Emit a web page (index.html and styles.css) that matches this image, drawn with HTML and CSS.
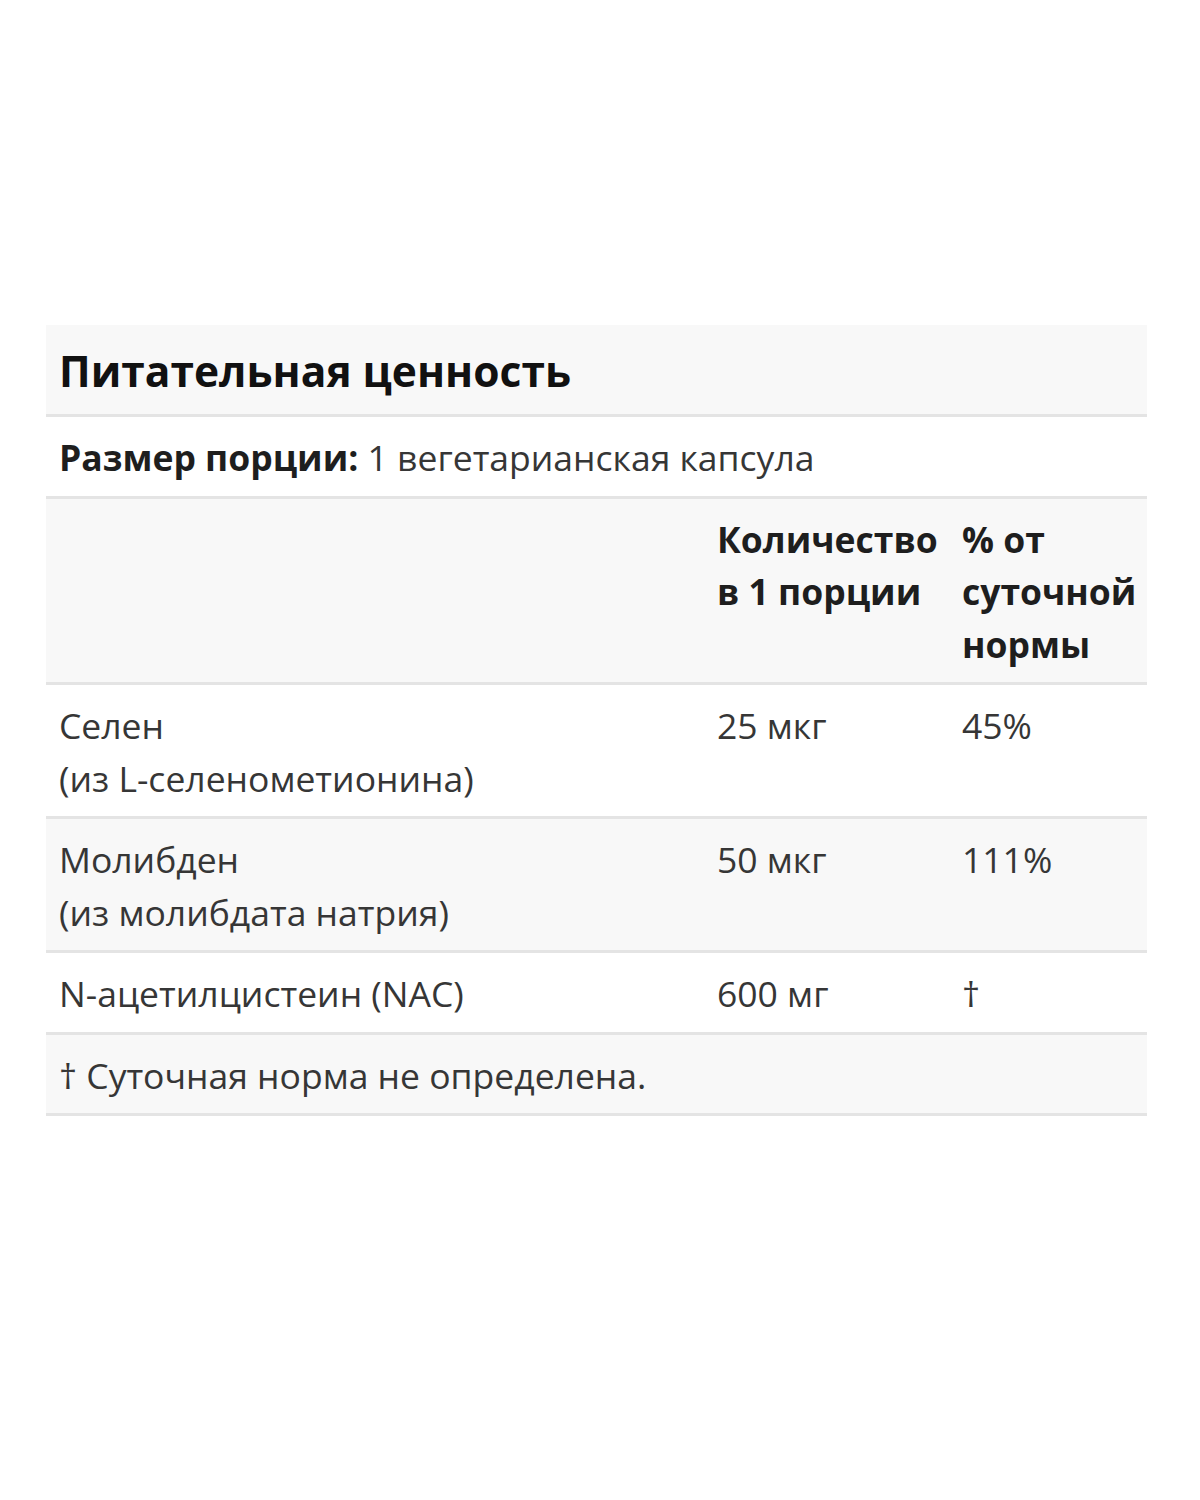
FILE: index.html
```html
<!DOCTYPE html>
<html lang="ru">
<head>
<meta charset="utf-8">
<title>Питательная ценность</title>
<link rel="stylesheet" href="styles.css">
</head>
<body>
<div class="page">
  <table class="facts">
    <colgroup>
      <col class="c1">
      <col class="c2">
      <col class="c3">
    </colgroup>
    <tr class="shade">
      <th class="title" colspan="3">Питательная ценность</th>
    </tr>
    <tr>
      <td colspan="3"><b>Размер порции:</b> 1 вегетарианская капсула</td>
    </tr>
    <tr class="shade head">
      <td></td>
      <td><b>Количество в&nbsp;1&nbsp;порции</b></td>
      <td><b>% от суточной нормы</b></td>
    </tr>
    <tr>
      <td>Селен<br>(из L-селенометионина)</td>
      <td>25 мкг</td>
      <td>45%</td>
    </tr>
    <tr class="shade">
      <td>Молибден<br>(из молибдата натрия)</td>
      <td>50 мкг</td>
      <td>111%</td>
    </tr>
    <tr>
      <td>N-ацетилцистеин (NAC)</td>
      <td>600 мг</td>
      <td>†</td>
    </tr>
    <tr class="shade">
      <td colspan="3">† Суточная норма не определена.</td>
    </tr>
  </table>
</div>
</body>
</html>
```

FILE: styles.css
```css
html, body {
  margin: 0;
  padding: 0;
  background: #ffffff;
}

.page {
  padding: 325px 53px 0 46px;
  font-family: "Open Sans", "Noto Sans", "DejaVu Sans", sans-serif;
}

.facts {
  width: 1101px;
  border-collapse: collapse;
  table-layout: fixed;
  color: #363636;
  font-size: 35.5px;
  line-height: 52.5px;
}

.c1 { width: 658px; }
.c2 { width: 245px; }
.c3 { width: 198px; }

.facts td,
.facts th {
  padding: 14px 4px 12px 13px;
  border-bottom: 3px solid #e4e4e4;
  vertical-align: top;
  text-align: left;
}

.facts b {
  font-weight: 700;
  color: #1e1e1e;
}

.shade {
  background: #f8f8f8;
}

.facts th.title {
  font-size: 42.5px;
  line-height: 58px;
  font-weight: 700;
  color: #111111;
  padding-top: 17px;
  padding-bottom: 14px;
}
```
